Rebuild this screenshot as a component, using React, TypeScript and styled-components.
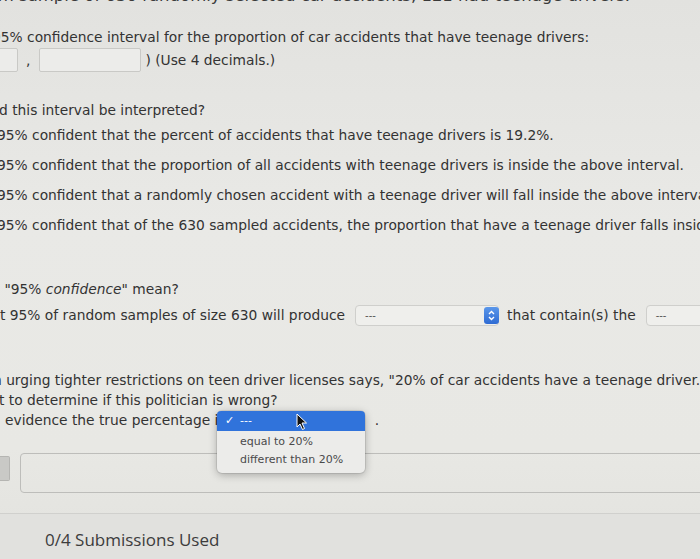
import styled, { createGlobalStyle } from "styled-components";

const GlobalStyle = createGlobalStyle`
  html, body {
    margin: 0;
    padding: 0;
    background: #e4e4e1;
  }
`;

const Page = styled.div`
  width: 700px;
  height: 559px;
  overflow: hidden;
  display: flex;
  flex-direction: column;
  background: linear-gradient(180deg, #e2e2df 0%, #e9e9e6 40%, #e8e8e4 80%, #e2e2de 100%);
  font-family: "DejaVu Sans", Verdana, sans-serif;
  color: #333;
`;

const Main = styled.div`
  flex: 1;
  display: flex;
  flex-direction: column;
  position: relative;
`;

const Intro = styled.div`
  display: flex;
  justify-content: flex-end;
  height: 20px;
  margin-top: -14px;
  padding-right: 70px;
  font-size: 16.5px;
  line-height: 20px;
  white-space: nowrap;
  color: #3a3a3a;
`;

const Line = styled.div<{ $top?: number; $cut?: number; $h?: number }>`
  height: ${(p) => p.$h ?? 20}px;
  margin-top: ${(p) => p.$top ?? 0}px;
  text-indent: ${(p) => -(p.$cut ?? 0)}px;
  font-size: 13.8px;
  line-height: ${(p) => p.$h ?? 20}px;
  white-space: nowrap;
`;

const Row = styled.div<{ $top?: number }>`
  display: flex;
  align-items: center;
  height: 24px;
  margin-top: ${(p) => p.$top ?? 0}px;
  font-size: 13.8px;
  white-space: nowrap;
`;

const TextBox = styled.div<{ $w: number; $left?: number }>`
  width: ${(p) => p.$w}px;
  height: 22px;
  margin-left: ${(p) => p.$left ?? 0}px;
  background: #ececea;
  border: 1px solid #c9c9c6;
  border-radius: 2px;
  flex-shrink: 0;
`;

const Comma = styled.span`
  margin: 0 9px 0 8px;
`;

const Hint = styled.span`
  margin-left: 4px;
`;

const Select = styled.div<{ $w: number }>`
  position: relative;
  display: flex;
  align-items: center;
  width: ${(p) => p.$w}px;
  height: 21px;
  margin: 0 8px 0 10px;
  padding-left: 9px;
  box-sizing: border-box;
  background: #efefec;
  border: 1px solid #cfcfcc;
  border-radius: 4px;
  font-size: 10px;
  color: #555;
  flex-shrink: 0;
`;

const Stepper = styled.div`
  position: absolute;
  right: -1px;
  top: 1px;
  width: 15px;
  height: 17px;
  border-radius: 3px;
  background: linear-gradient(180deg, #5a97ea, #2f6bd3);
  display: flex;
  align-items: center;
  justify-content: center;
`;

const Option = styled.div`
  height: 30px;
  line-height: 30px;
  font-size: 13.8px;
  white-space: nowrap;
  text-indent: -3px;
`;

const PickRow = styled.div`
  position: relative;
  display: flex;
  align-items: center;
  height: 20px;
  padding-left: 5px;
  font-size: 13.8px;
  white-space: nowrap;
`;

const HiddenSelect = styled.div`
  width: 146px;
  margin: 0 3px 0 0;
  height: 20px;
`;

const Menu = styled.div`
  position: absolute;
  left: 217px;
  top: 1px;
  width: 148px;
  padding-bottom: 4px;
  background: #ececea;
  border-radius: 5px;
  box-shadow: 0 2px 8px rgba(0, 0, 0, 0.28), 0 0 0 1px rgba(0, 0, 0, 0.08);
  font-size: 11px;
  color: #4a4a4a;
  z-index: 2;
`;

const MenuItem = styled.div<{ $active?: boolean }>`
  position: relative;
  height: ${(p) => (p.$active ? 20 : 18)}px;
  line-height: ${(p) => (p.$active ? 20 : 18)}px;
  padding-left: 23px;
  background: ${(p) => (p.$active ? "#3073db" : "transparent")};
  color: ${(p) => (p.$active ? "#fff" : "#4a4a4a")};
  border-radius: ${(p) => (p.$active ? "4px 4px 0 0" : "0")};
  margin-bottom: ${(p) => (p.$active ? 2 : 0)}px;
`;

const Check = styled.span`
  position: absolute;
  left: 8px;
  top: 0;
  font-size: 11px;
`;

const Cursor = styled.svg`
  position: absolute;
  left: 79px;
  top: 2px;
`;

const AnswerArea = styled.div`
  display: flex;
  align-items: center;
  margin-top: 23px;
  height: 39px;
`;

const SideButton = styled.div`
  width: 9px;
  height: 23px;
  margin-top: -8px;
  background: #c9c9c6;
  border: 1px solid #b5b5b2;
  border-left: none;
  border-radius: 0 2px 2px 0;
`;

const AnswerBox = styled.div`
  margin-left: 10px;
  flex: 1;
  height: 38px;
  margin-right: -20px;
  border: 1px solid #bdbdba;
  border-radius: 4px;
`;

const Footer = styled.div`
  height: 46px;
  box-sizing: border-box;
  padding-top: 5px;
  border-top: 1px solid #d0d0cd;
  background: #e1e1de;
  display: flex;
  align-items: center;
  padding-left: 45px;
  font-family: "Open Sans", "Noto Sans", sans-serif;
  font-size: 17px;
  color: #3c3c3c;
`;

const Dot = styled.span`
  font-size: 13.8px;
`;

function Arrows() {
  return (
    <Stepper>
      <svg width="9" height="13" viewBox="0 0 9 13">
        <path d="M2 5 L4.5 2.5 L7 5" stroke="#fff" strokeWidth="1.4" fill="none" />
        <path d="M2 8 L4.5 10.5 L7 8" stroke="#fff" strokeWidth="1.4" fill="none" />
      </svg>
    </Stepper>
  );
}

export default function App() {
  return (
    <>
      <GlobalStyle />
      <Page>
        <Main>
          <Intro>In a random sample of 630 randomly selected car accidents, 121 had teenage drivers.</Intro>
          <Line $top={21} $cut={8}>
            95% confidence interval for the proportion of car accidents that have teenage drivers:
          </Line>
          <Row $top={1}>
            <TextBox $w={20} $left={-4} />
            <Comma>,</Comma>
            <TextBox $w={100} />
            <Hint>) (Use 4 decimals.)</Hint>
          </Row>
          <Line $top={28} $cut={1}>
            d this interval be interpreted?
          </Line>
          <Option>95% confident that the percent of accidents that have teenage drivers is 19.2%.</Option>
          <Option>95% confident that the proportion of all accidents with teenage drivers is inside the above interval.</Option>
          <Option>95% confident that a randomly chosen accident with a teenage driver will fall inside the above interval.</Option>
          <Option>95% confident that of the 630 sampled accidents, the proportion that have a teenage driver falls inside the above interval.</Option>
          <Line $top={39}>
            &nbsp;"95% <i>confidence</i>" mean?
          </Line>
          <Row $top={4}>
            <span>t 95% of random samples of size 630 will produce</span>
            <Select $w={144}>
              ---
              <Arrows />
            </Select>
            <span>that contain(s) the</span>
            <Select $w={100}>---</Select>
          </Row>
          <Line $top={43} $cut={7}>
            n urging tighter restrictions on teen driver licenses says, "20% of car accidents have a teenage driver."
          </Line>
          <Line $cut={1}>t to determine if this politician is wrong?</Line>
          <PickRow>
            evidence the true percentage is
            <HiddenSelect />
            <Dot>.</Dot>
            <Menu>
              <MenuItem $active>
                <Check>✓</Check>
                ---
                <Cursor width="12" height="18" viewBox="0 0 12 18">
                  <path d="M1 1 L1 14 L4 11 L6.5 16.5 L8.5 15.5 L6 10 L10.5 10 Z" fill="#111" stroke="#fff" strokeWidth="1" />
                </Cursor>
              </MenuItem>
              <MenuItem>equal to 20%</MenuItem>
              <MenuItem>different than 20%</MenuItem>
            </Menu>
          </PickRow>
          <AnswerArea>
            <SideButton />
            <AnswerBox />
          </AnswerArea>
        </Main>
        <Footer>0/4 Submissions Used</Footer>
      </Page>
    </>
  );
}
